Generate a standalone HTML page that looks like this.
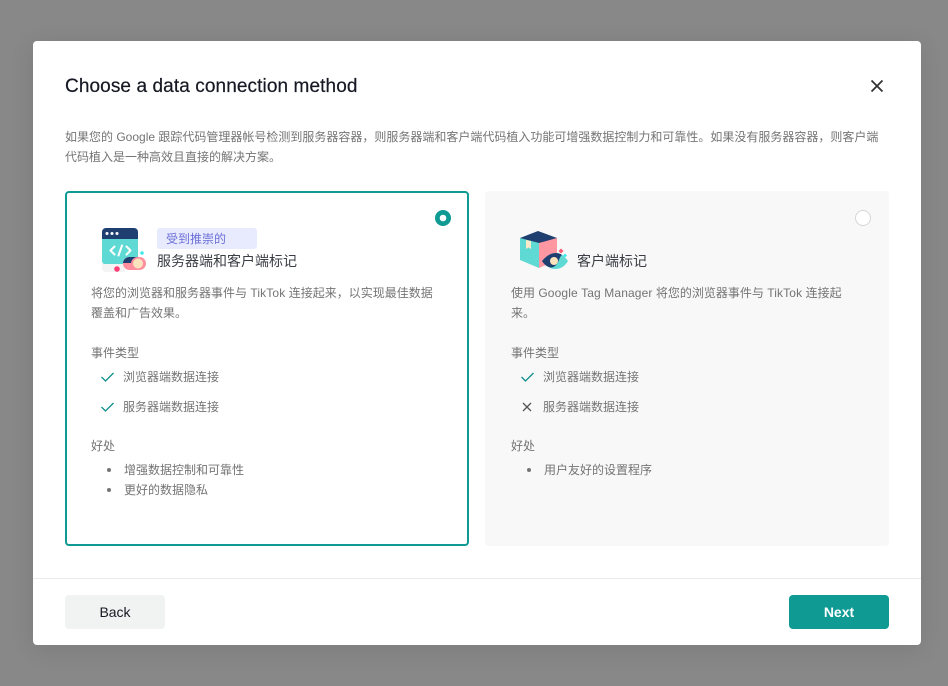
<!DOCTYPE html>
<html lang="zh"><head><meta charset="utf-8"><title>Choose a data connection method</title>
<style>
html,body{margin:0;padding:0;width:948px;height:686px;overflow:hidden;background:#888;}
body{position:relative;font-family:"Liberation Sans","Noto Sans CJK SC",sans-serif;}
div,svg{position:absolute;}
.t{white-space:nowrap;font-size:12px;line-height:20px;color:#747474;}
.t span{letter-spacing:.13px;}
.modal{left:33px;top:41px;width:888px;height:604px;background:#fff;border-radius:4px;box-shadow:0 4px 24px rgba(0,0,0,.1);}
.card1{left:65px;top:191px;width:400px;height:351px;border:2px solid #0f9a94;border-radius:4px;background:#fff;}
.card2{left:485px;top:191px;width:404px;height:355px;border-radius:4px;background:#f8f8f8;}
.btn{top:595px;width:100px;height:34px;border-radius:4px;font-size:14px;line-height:34px;text-align:center;}
.h{font-size:14px;line-height:20px;color:#3a3d44;white-space:nowrap;}
.dot{width:4px;height:4px;border-radius:50%;background:#747474;}
</style></head><body>
<div class="modal"></div>
<div style="left:65px;top:75px;font-size:19px;letter-spacing:.1px;line-height:24px;color:#161823;white-space:nowrap;-webkit-text-stroke:.2px #161823;">Choose a data connection method</div>
<svg style="left:869px;top:78px" width="16" height="16" viewBox="0 0 16 16"><path d="M2.500 2.500L13.500 13.500M13.500 2.500L2.500 13.500" stroke="#333" stroke-width="1.800" fill="none"/></svg>
<div class="t" style="left:65px;top:127px;">如果您的 Google 跟踪代码管理器帐号检测到服务器容器，则服务器端和客户端代码植入功能可增强数据控制力和可靠性。如果没有服务器容器，则客户端</div>
<div class="t" style="left:65px;top:147px;">代码植入是一种高效且直接的解决方案。</div>

<div class="card1"></div>
<div class="card2"></div>

<svg style="left:435px;top:210px" width="16" height="16" viewBox="0 0 16 16"><circle cx="8" cy="8" r="8" fill="#0f9a94"/><circle cx="8" cy="8" r="3.300" fill="#fff"/></svg>
<div style="left:855px;top:210px;width:14px;height:14px;border:1px solid #d6d6d6;border-radius:50%;background:#fff;"></div>

<svg style="left:100px;top:226px" width="48" height="48" viewBox="0 0 48 48">
<path d="M2 36H25V46H6a4 4 0 0 1-4-4Z" fill="#f4f4f4"/>
<path d="M2 13H38V38H5a3 3 0 0 1-3-3Z" fill="#5fd9d3"/>
<path d="M2 13V6a4 4 0 0 1 4-4H34a4 4 0 0 1 4 4V13Z" fill="#1f3f70"/>
<circle cx="7" cy="7.500" r="1.500" fill="#fff"/><circle cx="12" cy="7.500" r="1.500" fill="#fff"/><circle cx="17" cy="7.500" r="1.500" fill="#fff"/>
<path d="M14.500 20.500L10.500 24.500L14.500 28.500M26.500 20.500L30.500 24.500L26.500 28.500M22 19.500L18.500 29.500" stroke="#fff" stroke-width="2" fill="none" stroke-linecap="round" stroke-linejoin="round"/>
<rect x="23" y="31" width="23" height="13" rx="6.500" fill="#ff8f9e"/>
<path d="M29.500 31H39a7 7 0 0 0-8 6H23a6.500 6.500 0 0 1 6.500-6Z" fill="#1f3f70"/>
<circle cx="38" cy="37.500" r="5" fill="#fbe3bd"/>
<circle cx="17" cy="43" r="2.800" fill="#fb3e78"/>
<circle cx="42" cy="27" r="1.800" fill="#3fe9ea"/>
</svg>

<div style="left:157px;top:228px;width:100px;height:21px;background:#e8eafd;border-radius:3px;"></div>
<div class="t" style="left:166px;top:229px;color:#6a6fd8;">受到推崇的</div>
<div class="h" style="left:157px;top:251px;">服务器端和客户端标记</div>

<svg style="left:518px;top:229px" width="52" height="44" viewBox="0 0 52 44">
<path d="M2 9L21 13V39L2 31Z" fill="#5fd9d3"/>
<path d="M21 13L39 9V31L21 39Z" fill="#ff97a3"/>
<path d="M2 9L20 2L39 9L21 14Z" fill="#1f3f70"/>
<path d="M8 11L13 12V20L10.500 18.500L8 20Z" fill="#fbe9c8"/>
<path d="M24 32C28 27 33 24 38 24C43 24 47 28 50 32C47 37 43 40 37 40C32 40 28 37 24 32Z" fill="#5fd9d3"/>
<path d="M24 32C28 27 33 24 38 24C40 24 42 24.500 44 26C41 28 41 34 37 37C35 38.500 33 39 31 38C28 37 26 35 24 32Z" fill="#1f3f70"/>
<circle cx="36" cy="32" r="4" fill="#fbe3bd"/>
<path d="M43 19.500L45.500 22L43 24.500L40.500 22Z" fill="#ff5a73"/>
<path d="M47 24.500L49 26.500L47 28.500L45 26.500Z" fill="#3fe9ea"/>
</svg>
<div class="h" style="left:577px;top:251px;">客户端标记</div>

<div class="t" style="left:91px;top:283px;">将您的浏览器和服务器事件与 <span>TikTok</span> 连接起来，以实现最佳数据</div>
<div class="t" style="left:91px;top:303px;">覆盖和广告效果。</div>
<div class="t" style="left:91px;top:343px;">事件类型</div>
<svg style="left:100px;top:370px" width="15" height="14" viewBox="0 0 15 14"><path d="M1.500 7L5.500 11L13.500 3" stroke="#0f8f8a" stroke-width="1.300" fill="none"/></svg>
<div class="t" style="left:123px;top:367px;">浏览器端数据连接</div>
<svg style="left:100px;top:400px" width="15" height="14" viewBox="0 0 15 14"><path d="M1.500 7L5.500 11L13.500 3" stroke="#0f8f8a" stroke-width="1.300" fill="none"/></svg>
<div class="t" style="left:123px;top:397px;">服务器端数据连接</div>
<div class="t" style="left:91px;top:436px;">好处</div>
<div class="dot" style="left:107px;top:468px;"></div>
<div class="t" style="left:124px;top:460px;">增强数据控制和可靠性</div>
<div class="dot" style="left:107px;top:488px;"></div>
<div class="t" style="left:124px;top:480px;">更好的数据隐私</div>

<div class="t" style="left:511px;top:283px;">使用 <span>Google Tag Manager</span> 将您的浏览器事件与 <span>TikTok</span> 连接起</div>
<div class="t" style="left:511px;top:303px;">来。</div>
<div class="t" style="left:511px;top:343px;">事件类型</div>
<svg style="left:520px;top:370px" width="15" height="14" viewBox="0 0 15 14"><path d="M1.500 7L5.500 11L13.500 3" stroke="#0f8f8a" stroke-width="1.300" fill="none"/></svg>
<div class="t" style="left:543px;top:367px;">浏览器端数据连接</div>
<svg style="left:520px;top:400px" width="15" height="14" viewBox="0 0 15 14"><path d="M3 3L11 11M11 3L3 11" stroke="#555" stroke-width="1.300" fill="none"/></svg>
<div class="t" style="left:543px;top:397px;">服务器端数据连接</div>
<div class="t" style="left:511px;top:436px;">好处</div>
<div class="dot" style="left:527px;top:468px;"></div>
<div class="t" style="left:544px;top:460px;">用户友好的设置程序</div>

<div style="left:33px;top:578px;width:888px;height:1px;background:#ebebeb;"></div>
<div class="btn" style="left:65px;background:#f1f3f3;color:#161823;">Back</div>
<div class="btn" style="left:789px;background:#0f9a94;color:#fff;font-weight:bold;">Next</div>
</body></html>
